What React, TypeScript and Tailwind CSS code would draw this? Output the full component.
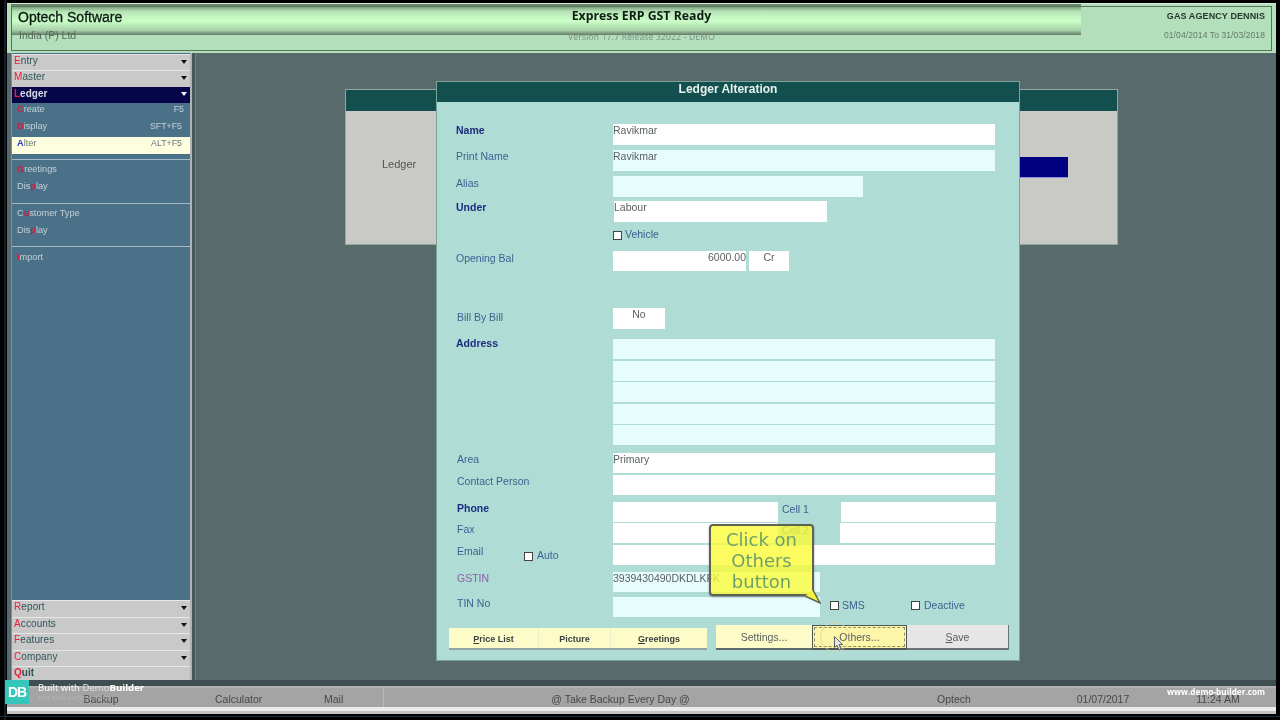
import React from "react";

const Arrow = ({ white }: { white?: boolean }) => (
  <svg width="6" height="4" viewBox="0 0 6 4" className="absolute right-[3px] top-[5px]">
    <path d="M0 0H6L3 4Z" fill={white ? "#ffffff" : "#111111"} />
  </svg>
);

const Head = ({ hot, rest }: { hot: string; rest: string }) => (
  <div className="relative h-[16.5px] shrink-0 bg-[#c9c9c9] border-t border-[#e6e6e6] pl-[2px] text-[10px] leading-[11px] tracking-[0.1px] text-[#2f5458]">
    <span className="text-[#ee1c34]">{hot}</span>
    {rest}
    <Arrow />
  </div>
);

const Sub = ({
  pre,
  hot,
  post,
  keys,
  active,
  wide,
}: {
  pre?: string;
  hot: string;
  post: string;
  keys?: string;
  active?: boolean;
  wide?: boolean;
}) => (
  <div
    className={`h-[17px] flex justify-between pl-[5px] text-[9.2px] leading-[13px] ${wide ? "pr-[8px]" : "pr-[6px]"} ${
      active ? "bg-[#fdfde0] text-[#67757b]" : "text-[#c3d0d6]"
    }`}
  >
    <span>
      {pre}
      <span className={active ? "font-bold text-[#2a36c8]" : "font-bold text-[#cc2040]"}>{hot}</span>
      {post}
    </span>
    {keys && <span className="text-[8.8px]">{keys}</span>}
  </div>
);

const Box = ({ children, className }: { children?: React.ReactNode; className: string }) => (
  <div className={`shrink-0 text-[10.5px] leading-[13px] text-[#5a5f60] ${className}`}>{children}</div>
);

const Check = ({ className }: { className?: string }) => (
  <span className={`inline-block w-[9px] h-[9px] bg-white border border-[#444444] shrink-0 ${className ?? ""}`} />
);

const Label = ({ children, bold, className }: { children: React.ReactNode; bold?: boolean; className: string }) => (
  <div
    className={`shrink-0 text-[10.5px] leading-[13px] ${bold ? "font-bold text-[#1c2d80]" : "text-[#3f6190]"} ${className}`}
  >
    {children}
  </div>
);

export default function App() {
  return (
    <div className="relative w-[1280px] h-[720px] overflow-hidden bg-black pt-[3px] pl-[7px] pr-[4px] pb-[6px] flex flex-col [font-family:'Liberation_Sans',Arial,sans-serif] blur-[0.35px]">
      <div className="absolute left-[4px] top-0 w-[2px] h-full bg-[#12202e]" />
      <div className="absolute left-0 bottom-[3px] w-full h-px bg-[#1c3040]" />

      {/* Header */}
      <header className="relative h-[50px] shrink-0 bg-[#b3dfba] px-[4px] pt-[2px] pb-[2px] border-t border-[#d5ecd8]">
        <div className="absolute left-[4px] top-0 w-[1070px] h-[31px] bg-[linear-gradient(to_bottom,#5d7a60_0%,#b8e6b8_25%,#ccffc8_55%,#a6cfa8_85%,#627c66_100%)]" />
        <div className="relative h-full border border-[#56735c] grid grid-cols-[1fr_auto_1fr]">
          <div className="pl-[6px]">
            <div className="h-[20px] text-[14px] leading-[20px] text-[#0b1a10] [-webkit-text-stroke:0.3px_#0b1a10]">Optech Software</div>
            <div className="h-[20px] pl-px text-[10.5px] leading-[17px] text-[#56695a]">India (P) Ltd</div>
          </div>
          <div className="text-center">
            <div className="h-[20px] text-[12.3px] font-bold leading-[17px] text-[#0e1d12] [font-family:'Open_Sans',sans-serif]">
              Express ERP GST Ready
            </div>
            <div className="h-[20px] text-[8.5px] leading-[19px] tracking-[0.2px] text-[#7a8f80] [font-family:'Open_Sans',sans-serif]">
              Version 17.7 Release 32022 - DEMO
            </div>
          </div>
          <div className="text-right pr-[6px]">
            <div className="h-[20px] text-[9px] font-bold leading-[19px] tracking-[0.1px] text-[#26382a]">GAS AGENCY DENNIS</div>
            <div className="h-[20px] text-[8.5px] leading-[17px] tracking-[0.1px] text-[#65796a]">01/04/2014 To 31/03/2018</div>
          </div>
        </div>
      </header>

      {/* Middle */}
      <div className="flex-1 min-h-0 flex bg-[#596a6c]">
        <div className="w-[5px] shrink-0 border-r border-[#7f9094]" />
        <aside className="w-[178px] shrink-0 flex flex-col justify-between bg-[#4b7189] pt-px overflow-hidden">
          <div>
            <div className="h-[16px]">
              <Head hot="E" rest="ntry" />
            </div>
            <Head hot="M" rest="aster" />
            <div className="relative h-[16px] bg-[#050547] pl-[2px] text-[10px] font-bold leading-[13px] text-[#d8dde8]">
              <span className="text-[#ee1c34]">L</span>edger
              <Arrow white />
            </div>
            <Sub hot="C" post="reate" keys="F5" />
            <Sub hot="D" post="isplay" keys="SFT+F5" wide />
            <Sub hot="A" post="lter" keys="ALT+F5" active wide />
            <div className="pb-[5.5px] border-b border-[#a3bac4]" />
            <div className="pt-[3px] pb-[6px] border-b border-[#a3bac4]">
              <Sub hot="G" post="reetings" />
              <Sub pre="Dis" hot="p" post="lay" />
            </div>
            <div className="pt-[3px] pb-[5px] border-b border-[#a3bac4]">
              <Sub pre="C" hot="u" post="stomer Type" />
              <Sub pre="Dis" hot="p" post="lay" />
            </div>
            <div className="pt-[4px]">
              <Sub hot="I" post="mport" />
            </div>
          </div>
          <div className="h-[80px] flex flex-col">
            <Head hot="R" rest="eport" />
            <Head hot="A" rest="ccounts" />
            <Head hot="F" rest="eatures" />
            <Head hot="C" rest="ompany" />
            <div className="flex-1 bg-[#c9c9c9] border-t border-[#e6e6e6] pl-[2px] text-[10px] leading-[11px] font-bold text-[#2f5458]">
              <span className="text-[#ee1c34]">Q</span>uit
            </div>
          </div>
        </aside>
        <div className="w-[6px] shrink-0 flex">
          <div className="w-[2px] bg-[#aeb4b4]" />
          <div className="w-[3px] bg-[#47585b]" />
          <div className="w-px bg-[#6f8083]" />
        </div>

        <main className="relative flex-1 min-w-0">
          {/* Back window */}
          <section className="absolute left-[149px] top-[36px] w-[773px] h-[156px] flex flex-col border border-[#8fa89e] bg-[#c9cac5]">
            <div className="h-[21px] shrink-0 bg-[#134f4f]" />
            <div className="flex-1 flex pl-[36px] pr-[49px] pt-[47px] text-[11px] leading-[13px] text-[#4f5555]">
              <span>Ledger</span>
              <div className="ml-auto w-[48px] h-[21px] -mt-px bg-[#000080] border-b border-[#8c8ce0]" />
            </div>
          </section>

          {/* Dialog */}
          <section className="absolute left-[240px] top-[28px] w-[584px] h-[580px] bg-[#afdcd5] border border-[#7ba397]">
            <div className="h-[20px] bg-[#134f4f] text-center text-[12px] font-bold leading-[14px] text-[#e6f2ee]">Ledger Alteration</div>

            <div className="flex h-[21px] mt-[22px] pl-[19px]">
              <Label bold className="w-[157px]">Name</Label>
              <Box className="w-[382px] h-[21px] bg-white">Ravikmar</Box>
            </div>
            <div className="flex h-[21px] mt-[5px] pl-[19px]">
              <Label className="w-[157px]">Print Name</Label>
              <Box className="w-[382px] h-[21px] bg-[#e6fcfd]">Ravikmar</Box>
            </div>
            <div className="flex h-[21px] mt-[5px] pl-[19px]">
              <Label className="w-[157px] pt-px">Alias</Label>
              <Box className="w-[250px] h-[21px] bg-[#e6fcfd]" />
            </div>
            <div className="flex h-[21px] mt-[4px] pl-[19px]">
              <Label bold className="w-[157px]">Under</Label>
              <Box className="ml-px w-[213px] h-[21px] bg-white">Labour</Box>
            </div>
            <div className="flex items-center h-[12px] mt-[7px] pl-[176px] text-[10.5px] text-[#3f6190]">
              <Check className="mr-[3px]" />
              <span>Vehicle</span>
            </div>
            <div className="flex h-[20px] mt-[10px] pl-[19px]">
              <Label className="w-[157px] pt-px">Opening Bal</Label>
              <Box className="w-[133px] h-[20px] bg-white text-right">6000.00</Box>
              <Box className="ml-[3px] w-[40px] h-[20px] bg-white text-center">Cr</Box>
            </div>
            <div className="flex h-[21px] mt-[37px] pl-[20px]">
              <Label className="w-[156px] pt-[3px]">Bill By Bill</Label>
              <Box className="w-[52px] h-[21px] bg-white text-center">No</Box>
            </div>
            <div className="flex mt-[10px] pl-[19px]">
              <Label bold className="w-[157px] -mt-[2px]">Address</Label>
              <div className="w-[382px] flex flex-col gap-[1.5px]">
                <Box className="h-[20px] bg-[#e6fcfd]" />
                <Box className="h-[20px] bg-[#e6fcfd]" />
                <Box className="h-[20px] bg-[#e6fcfd]" />
                <Box className="h-[20px] bg-[#e6fcfd]" />
                <Box className="h-[20px] bg-[#e6fcfd]" />
              </div>
            </div>
            <div className="flex h-[20px] mt-[8px] pl-[20px]">
              <Label className="w-[156px]">Area</Label>
              <Box className="w-[382px] h-[20px] bg-white">Primary</Box>
            </div>
            <div className="flex h-[20px] mt-[2px] pl-[20px]">
              <Label className="w-[156px]">Contact Person</Label>
              <Box className="w-[382px] h-[20px] bg-white" />
            </div>
            <div className="flex h-[20px] mt-[7px] pl-[20px]">
              <Label bold className="w-[156px]">Phone</Label>
              <Box className="w-[165px] h-[20px] bg-white" />
              <div className="w-[63px] pl-[4px] text-[10.5px] leading-[15px] text-[#3f6190]">Cell 1</div>
              <Box className="w-[155px] h-[20px] bg-white" />
            </div>
            <div className="flex h-[20px] mt-px pl-[20px]">
              <Label className="w-[156px]">Fax</Label>
              <Box className="w-[165px] h-[20px] bg-white" />
              <div className="w-[62px] pl-[4px] text-[10.5px] leading-[15px] text-[#3f6190]">Cell 2</div>
              <Box className="w-[155px] h-[20px] bg-white" />
            </div>
            <div className="flex h-[20px] mt-[2px] pl-[20px]">
              <div className="w-[67px] text-[10.5px] leading-[13px] text-[#3f6190]">Email</div>
              <div className="w-[89px] flex items-center h-[20px] pt-[2px] text-[10.5px] text-[#3f6190]">
                <Check className="mr-[4px]" />
                <span>Auto</span>
              </div>
              <Box className="w-[382px] h-[20px] bg-white" />
            </div>
            <div className="flex h-[20px] mt-[7px] pl-[20px]">
              <Label className="w-[156px] !text-[#8a5fa6]">GSTIN</Label>
              <Box className="w-[207px] h-[20px] bg-[#e6fcfd]">3939430490DKDLKFK</Box>
            </div>
            <div className="flex h-[20px] mt-[5px] pl-[20px]">
              <Label className="w-[156px]">TIN No</Label>
              <Box className="w-[207px] h-[20px] bg-[#e6fcfd]" />
              <div className="flex items-center h-[17px] ml-[10px] text-[10.5px] text-[#3f6190]">
                <Check className="mr-[3px]" />
                <span className="w-[69px]">SMS</span>
                <Check className="mr-[4px]" />
                <span>Deactive</span>
              </div>
            </div>

            <div className="flex mt-[8px] ml-[12px]">
              <div className="flex mt-[3px] h-[22px] bg-[#fdfbc8] border-b-2 border-[#8fa7a0] text-[9px] font-bold leading-[22px] text-[#3a4040]">
                <span className="w-[90px] text-center border-r border-[#e8ecc8]">
                  <u>P</u>rice List
                </span>
                <span className="w-[72px] text-center border-r border-[#e8ecc8]">Picture</span>
                <span className="w-[96px] text-center">
                  <u>G</u>reetings
                </span>
              </div>
              <div className="ml-[9px] w-[96px] h-[25px] bg-[#fdfbc8] border-b-2 border-[#5f6b68] text-center text-[10.5px] leading-[24px] text-[#5a6060]">
                Settings...
              </div>
              <div className="w-[95px] h-[25px] bg-[#fdf5a8] border border-b-2 border-[#4f5653] p-px">
                <div className="h-full border border-dashed border-[#8f9060] text-center text-[10.5px] leading-[19px] text-[#5a6060]">
                  Others...
                </div>
              </div>
              <div className="w-[102px] h-[25px] bg-[#e6e6e6] border-b-2 border-r border-[#6b7472] text-center text-[10.5px] leading-[24px] text-[#5a6060]">
                <u>S</u>ave
              </div>
            </div>
          </section>
        </main>
      </div>

      {/* Footer */}
      <div className="h-[6px] shrink-0 bg-[#3f4e50]" />
      <footer className="h-[21px] shrink-0 bg-[#a4a4a4] border-t-2 border-[#b3b3b3] grid grid-cols-[376px_474px_194px_104px_121px] text-[10.5px] leading-[23px] text-[#45494a]">
        <div className="flex">
          <span className="w-[188px] text-center">Backup</span>
          <span className="w-[129px] pl-[20px]">Calculator</span>
          <span>Mail</span>
        </div>
        <span className="text-center border-l border-[#b9b9b9]">@ Take Backup Every Day @</span>
        <span className="text-center">Optech</span>
        <span className="text-center">01/07/2017</span>
        <span className="text-center pl-[5px]">11:24 AM</span>
      </footer>
      <div className="h-[4px] shrink-0 bg-[#ececec]" />
      <div className="h-[3px] shrink-0 bg-[#c3c3c3]" />

      {/* Tooltip */}
      <div className="absolute left-[709px] top-[524px] w-[105px] h-[72px] rounded-[4px] border-2 border-[#5f6350] bg-[#fbfb38]/80 text-center text-[18px] leading-[21px] text-[#6f9f6a] [font-family:'DejaVu_Sans',sans-serif] pt-[3px] shadow-[0_1px_2px_rgba(0,0,0,0.4)]">
        Click on
        <br />
        Others
        <br />
        button
      </div>
      <svg width="17" height="15" viewBox="0 0 17 15" className="absolute left-[804px] top-[589px]">
        <path d="M9 1L16 14L1 7Z" fill="#f4f43c" />
        <path d="M9 1L16 14L1 7" fill="none" stroke="#5f6350" strokeWidth="1.5" />
      </svg>

      {/* Pointer highlight */}
      <div className="absolute left-[820px] top-[622px] w-[30px] h-[30px] rounded-full border border-[#d8d0a0]/70" />
      <svg width="10" height="15" viewBox="0 0 10 15" className="absolute left-[834px] top-[636px]">
        <path d="M0.5 0.5V11.5L3 9.3L5 14L7 13L5 8.6H8.6Z" fill="#e8eaec" stroke="#5b6064" strokeWidth="1" />
      </svg>

      {/* Watermark */}
      <div className="absolute left-[5px] top-[680px] w-[24px] h-[24px] bg-[#34c6b9] text-center text-[14px] font-black leading-[24px] tracking-[-1px] text-white">
        DB
      </div>
      <div className="absolute left-[38px] top-[682px] text-[9.6px] leading-[12px] text-white [font-family:'Open_Sans',sans-serif]">
        Built with <span className="text-[#e4e4e4]">Demo</span>
        <span className="font-bold">Builder</span>
      </div>
      <div className="absolute left-[38px] top-[694px] text-[6px] leading-[8px] tracking-[0.3px] text-[#c4c4c4] opacity-60 [font-family:'Open_Sans',sans-serif]">
        FOR EVALUATION ONLY
      </div>
      <div className="absolute left-[1167px] top-[686px] text-[8.2px] font-bold leading-[12px] text-white [font-family:'Open_Sans',sans-serif]">
        www.demo-builder.com
      </div>
    </div>
  );
}
